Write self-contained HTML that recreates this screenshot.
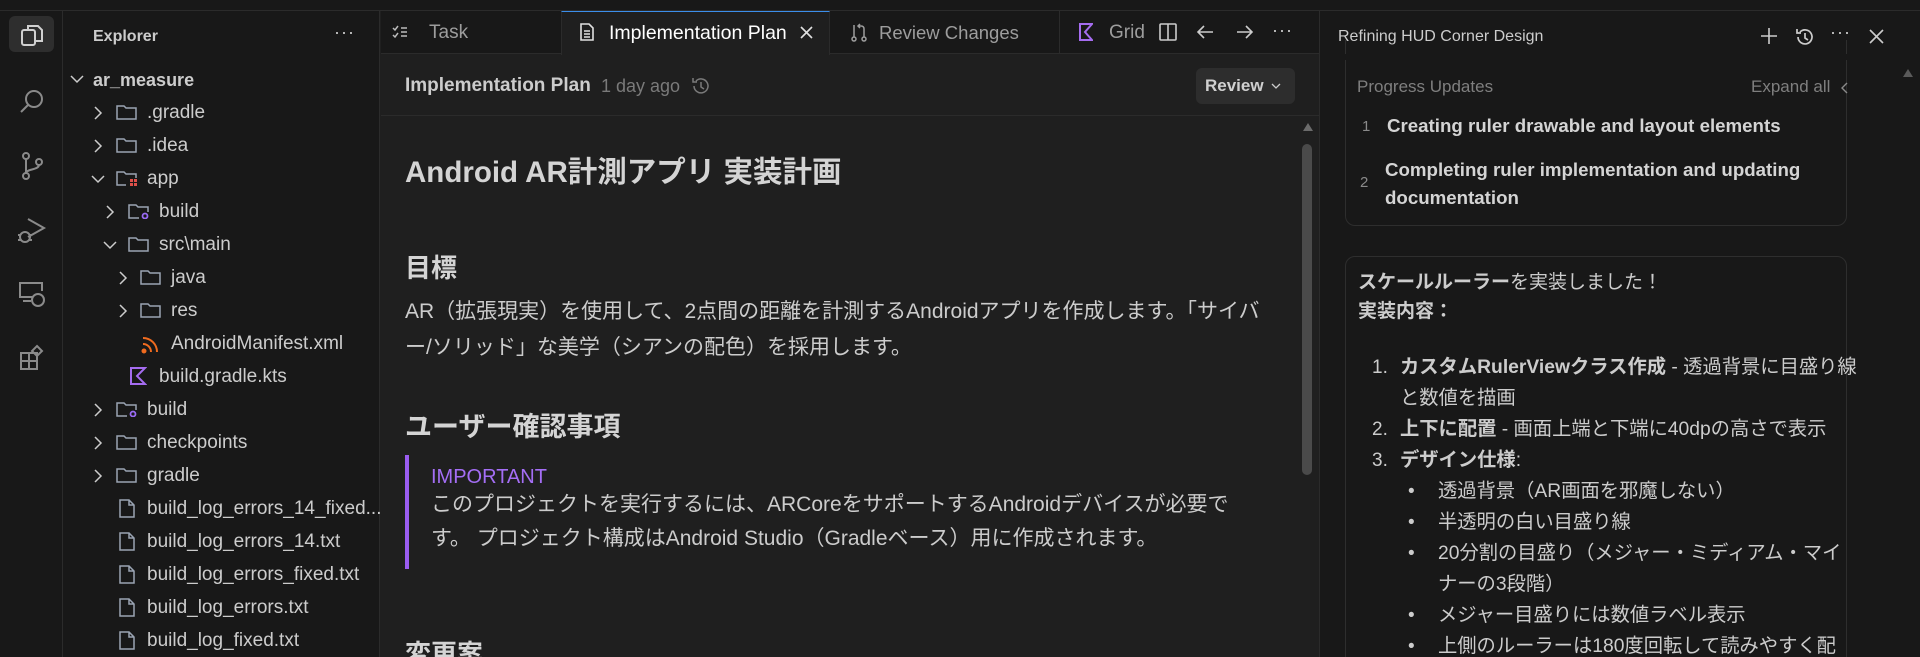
<!DOCTYPE html>
<html style="width:1920px;height:657px;overflow:hidden"><head><meta charset="utf-8"><style>
*{margin:0;padding:0;box-sizing:border-box}
body{width:1920px;height:657px;overflow:hidden;background:#1f1f1f;font-family:"Liberation Sans","Noto Sans CJK JP",sans-serif;color:#cccccc;position:relative}
.a{position:absolute;white-space:nowrap}
svg{position:absolute}
.row{position:absolute;font-size:19px;color:#cccccc;white-space:nowrap;line-height:22px}
</style></head><body>
<div class="a" style="left:0;top:0;width:1920px;height:11px;background:#181818;border-bottom:1px solid #2b2b2b"></div>
<div class="a" style="left:0;top:11px;width:63px;height:646px;background:#181818;border-right:1px solid #2b2b2b"></div>
<div class="a" style="left:9px;top:16px;width:45px;height:36px;background:#2e2e2e;border-radius:6px"></div>
<svg style="left:19px;top:22px" width="26" height="26" viewBox="0 0 26 26" fill="none" stroke="#d0d0d0" stroke-width="2"><rect x="3" y="8" width="13" height="15" rx="2"/><path d="M9 8V4h10l4 4v11h-7"/></svg>
<svg style="left:18px;top:88px" width="28" height="28" viewBox="0 0 28 28" fill="none" stroke="#8a8a8a" stroke-width="2"><circle cx="16" cy="11" r="8"/><path d="M10 17L3 24"/></svg>
<svg style="left:19px;top:151px" width="26" height="30" viewBox="0 0 26 30" fill="none" stroke="#8a8a8a" stroke-width="2"><circle cx="7" cy="5" r="3"/><circle cx="7" cy="25" r="3"/><circle cx="20" cy="11" r="3"/><path d="M7 8v14M20 14c0 5-13 4-13 8"/></svg>
<svg style="left:16px;top:216px" width="32" height="30" viewBox="0 0 32 30" fill="none" stroke="#8a8a8a" stroke-width="2"><path d="M12 3l16 9-16 9"/><circle cx="9" cy="21" r="5"/><path d="M2 19h3M2 24h3M13 19h3M13 24h3"/></svg>
<svg style="left:17px;top:280px" width="30" height="28" viewBox="0 0 30 28" fill="none" stroke="#8a8a8a" stroke-width="2"><path d="M16 17H3V3h22v8"/><path d="M6 21h8"/><circle cx="21" cy="20" r="6"/></svg>
<svg style="left:18px;top:343px" width="28" height="28" viewBox="0 0 28 28" fill="none" stroke="#8a8a8a" stroke-width="2"><rect x="3" y="10" width="8" height="8"/><rect x="11" y="10" width="8" height="8"/><rect x="3" y="18" width="8" height="8"/><rect x="11" y="18" width="8" height="8"/><path d="M19 3l5 5-5 5-5-5z"/></svg>
<div class="a" style="left:63px;top:11px;width:317px;height:646px;background:#181818;border-right:1px solid #2b2b2b"></div>
<div class="a" style="left:93px;top:28px;font-size:16px;font-weight:bold;color:#cccccc">Explorer</div>
<div class="a" style="left:334px;top:22px;font-size:18px;color:#cccccc;letter-spacing:1px">···</div>
<div class="a" style="left:381px;top:11px;width:938px;height:43px;background:#181818;border-bottom:1px solid #2b2b2b"></div>
<div class="a" style="left:561px;top:11px;width:269px;height:44px;background:#1f1f1f;border-top:1px solid #3b8eea;border-left:1px solid #2b2b2b;border-right:1px solid #2b2b2b"></div>
<div class="a" style="left:1059px;top:11px;width:1px;height:43px;background:#2b2b2b"></div>
<svg style="left:392px;top:25px" width="16" height="14" viewBox="0 0 16 14" fill="none" stroke="#bbbbbb" stroke-width="1.5"><path d="M1 3l2 2 3-4M1 10l2 2 3-4M9 3h6M9 7h6M9 11h6"/></svg>
<div class="a" style="left:429px;top:22px;font-size:19px;color:#9d9d9d">Task</div>
<svg style="left:580px;top:23px" width="14" height="18" viewBox="0 0 14 18" fill="none" stroke="#e0e0e0" stroke-width="1.6"><path d="M1 1h8l4 4v12H1z"/><path d="M4 8h6M4 11h6M4 14h6"/></svg>
<div class="a" style="left:609px;top:22px;font-size:19.5px;color:#ffffff">Implementation Plan</div>
<svg style="left:800px;top:26px" width="13" height="13" viewBox="0 0 13 13" stroke="#e0e0e0" stroke-width="1.6"><path d="M1 1l11 11M12 1L1 12"/></svg>
<svg style="left:851px;top:23px" width="16" height="20" viewBox="0 0 16 20" fill="none" stroke="#9d9d9d" stroke-width="1.5"><circle cx="3" cy="16" r="2"/><circle cx="13" cy="16" r="2"/><path d="M3 14V2M13 14V6c0-2-1-3-3-3H7M9 1L7 3l2 2"/></svg>
<div class="a" style="left:879px;top:22px;font-size:18.5px;color:#9d9d9d">Review Changes</div>
<svg style="left:1078px;top:23px" width="15" height="18" viewBox="0 0 15 18" fill="none" stroke="#a56cf0" stroke-width="2"><path d="M2 1v16h12L7 9l7-8z"/></svg>
<div class="a" style="left:1109px;top:22px;font-size:19px;color:#9d9d9d">Grid</div>
<svg style="left:1158px;top:22px" width="20" height="20" viewBox="0 0 20 20" fill="none" stroke="#cccccc" stroke-width="1.6"><rect x="2" y="2" width="16" height="16" rx="1"/><path d="M10 2v16"/></svg>
<svg style="left:1196px;top:24px" width="18" height="16" viewBox="0 0 18 16" fill="none" stroke="#cccccc" stroke-width="1.6"><path d="M17 8H2M8 2L2 8l6 6"/></svg>
<svg style="left:1236px;top:24px" width="18" height="16" viewBox="0 0 18 16" fill="none" stroke="#cccccc" stroke-width="1.6"><path d="M1 8h15M10 2l6 6-6 6"/></svg>
<div class="a" style="left:1272px;top:20px;font-size:18px;color:#cccccc;letter-spacing:1px">···</div>
<div class="a" style="left:381px;top:55px;width:938px;height:61px;border-bottom:1px solid #2b2b2b"></div>
<div class="a" style="left:405px;top:75px;font-size:19px;font-weight:bold;color:#cccccc">Implementation Plan</div>
<div class="a" style="left:601px;top:76px;font-size:18px;color:#7a7a7a">1 day ago</div>
<svg style="left:690px;top:75px" width="22" height="22" viewBox="0 0 22 22" fill="none" stroke="#7a7a7a" stroke-width="1.5"><path d="M4 11a7 7 0 1 0 2-5M3 3v4h4"/><path d="M11 7v5l3 2"/></svg>
<div class="a" style="left:1196px;top:68px;width:99px;height:36px;background:#2d2d2d;border-radius:6px"></div>
<div class="a" style="left:1205px;top:76px;font-size:17px;font-weight:bold;color:#d0d0d0">Review</div>
<svg style="left:1271px;top:83px" width="10" height="7" viewBox="0 0 10 7" fill="none" stroke="#cccccc" stroke-width="1.3"><path d="M1 1l4 4 4-4"/></svg>
<div class="a" style="left:405px;top:149px;font-size:29.5px;font-weight:bold;color:#d4d4d4">Android AR計測アプリ 実装計画</div>
<div class="a" style="left:405px;top:248px;font-size:26px;font-weight:bold;color:#d4d4d4">目標</div>
<div class="a" style="left:405px;top:294px;font-size:21px;line-height:36px;color:#cccccc">AR（拡張現実）を使用して、2点間の距離を計測するAndroidアプリを作成します。「サイバ<br>ー/ソリッド」な美学（シアンの配色）を採用します。</div>
<div class="a" style="left:405px;top:405px;font-size:27px;font-weight:bold;color:#d4d4d4">ユーザー確認事項</div>
<div class="a" style="left:405px;top:455px;width:4px;height:114px;background:#9a5cf0"></div>
<div class="a" style="left:431px;top:466px;font-size:20px;color:#a46ef5">IMPORTANT</div>
<div class="a" style="left:431px;top:488px;font-size:21px;line-height:34px;color:#cccccc">このプロジェクトを実行するには、ARCoreをサポートするAndroidデバイスが必要で<br>す。 プロジェクト構成はAndroid Studio（Gradleベース）用に作成されます。</div>
<div class="a" style="left:405px;top:634px;font-size:26px;font-weight:bold;color:#d4d4d4">変更案</div>
<svg style="left:1302px;top:122px" width="12" height="10" viewBox="0 0 12 10"><path d="M6 1l5 8H1z" fill="#6b6b6b"/></svg>
<div class="a" style="left:1302px;top:144px;width:10px;height:331px;background:#4a4a4a;border-radius:5px"></div>
<div class="a" style="left:1319px;top:11px;width:601px;height:646px;background:#181818;border-left:1px solid #2b2b2b;overflow:hidden">
<div class="a" style="left:25px;top:245px;width:502px;height:420px;border:1px solid #2e2e2e;border-radius:10px"></div>
</div>
<div class="a" style="left:1338px;top:28px;font-size:16px;color:#cccccc">Refining HUD Corner Design</div>
<svg style="left:1760px;top:27px" width="18" height="18" viewBox="0 0 18 18" stroke="#cccccc" stroke-width="1.6"><path d="M9 1v16M1 9h16"/></svg>
<svg style="left:1794px;top:26px" width="22" height="22" viewBox="0 0 22 22" fill="none" stroke="#cccccc" stroke-width="1.7"><path d="M4 11a7 7 0 1 0 2-5M3 3v4h4"/><path d="M11 7v5l3 2"/></svg>
<div class="a" style="left:1830px;top:22px;font-size:18px;color:#cccccc;letter-spacing:1px">···</div>
<svg style="left:1869px;top:29px" width="15" height="15" viewBox="0 0 15 15" stroke="#cccccc" stroke-width="1.6"><path d="M1 1l13 13M14 1L1 14"/></svg>
<div class="a" style="left:1345px;top:40px;width:502px;height:186px;border:1px solid #2e2e2e;border-top:none;border-radius:0 0 10px 10px"></div>
<div class="a" style="left:1320px;top:54px;width:600px;height:6px;background:#181818"></div>
<div class="a" style="left:1357px;top:77px;font-size:17px;color:#7f7f7f">Progress Updates</div>
<div class="a" style="left:1751px;top:77px;font-size:17px;color:#7f7f7f">Expand all</div>
<svg style="left:1840px;top:82px" width="8" height="12" viewBox="0 0 8 12" fill="none" stroke="#8a8a8a" stroke-width="1.4"><path d="M7 1L2 6l5 5"/></svg>
<div class="a" style="left:1362px;top:118px;font-size:15px;color:#8a8a8a">1</div>
<div class="a" style="left:1387px;top:115px;font-size:18.7px;font-weight:bold;color:#d4d4d4">Creating ruler drawable and layout elements</div>
<div class="a" style="left:1360px;top:174px;font-size:15px;color:#8a8a8a">2</div>
<div class="a" style="left:1385px;top:156px;font-size:18.7px;font-weight:bold;color:#d4d4d4;line-height:28px">Completing ruler implementation and updating<br>documentation</div>
<div class="a" style="left:1358px;top:268px;font-size:19px;line-height:29px;color:#cccccc"><b>スケールルーラー</b>を実装しました！<br><b>実装内容：</b></div>
<div class="a" style="left:1372px;top:352px;font-size:19px;line-height:31px;color:#cccccc">1.<br><br>2.<br>3.</div>
<div class="a" style="left:1400px;top:352px;font-size:19.3px;line-height:31px;color:#cccccc"><b>カスタムRulerViewクラス作成</b> - 透過背景に目盛り線<br>と数値を描画<br><b>上下に配置</b> - 画面上端と下端に40dpの高さで表示<br><b>デザイン仕様</b>:</div>
<div class="a" style="left:1408px;top:476px;font-size:19px;line-height:31px;color:#cccccc">•<br>•<br>•<br><br>•<br>•</div>
<div class="a" style="left:1438px;top:476px;font-size:19.3px;line-height:31px;color:#cccccc">透過背景（AR画面を邪魔しない）<br>半透明の白い目盛り線<br>20分割の目盛り（メジャー・ミディアム・マイ<br>ナーの3段階）<br>メジャー目盛りには数値ラベル表示<br>上側のルーラーは180度回転して読みやすく配</div>
<svg style="left:1902px;top:68px" width="12" height="10" viewBox="0 0 12 10"><path d="M6 1l5 8H1z" fill="#5a5a5a"/></svg>
<svg style="left:70px;top:74px" width="14" height="10" viewBox="0 0 14 10" fill="none" stroke="#cccccc" stroke-width="1.5"><path d="M1 2l6 6 6-6"/></svg>
<div class="row" style="left:93px;top:69px;font-weight:bold;font-size:18px">ar_measure</div>
<div class="row" style="left:147px;top:102px">.gradle</div>
<div class="row" style="left:147px;top:135px">.idea</div>
<div class="row" style="left:147px;top:168px">app</div>
<div class="row" style="left:159px;top:201px">build</div>
<div class="row" style="left:159px;top:234px">src\main</div>
<div class="row" style="left:171px;top:267px">java</div>
<div class="row" style="left:171px;top:300px">res</div>
<div class="row" style="left:171px;top:333px">AndroidManifest.xml</div>
<div class="row" style="left:159px;top:366px">build.gradle.kts</div>
<div class="row" style="left:147px;top:399px">build</div>
<div class="row" style="left:147px;top:432px">checkpoints</div>
<div class="row" style="left:147px;top:465px">gradle</div>
<div class="row" style="left:147px;top:498px">build_log_errors_14_fixed...</div>
<div class="row" style="left:147px;top:531px">build_log_errors_14.txt</div>
<div class="row" style="left:147px;top:564px">build_log_errors_fixed.txt</div>
<div class="row" style="left:147px;top:597px">build_log_errors.txt</div>
<div class="row" style="left:147px;top:630px">build_log_fixed.txt</div>
<svg style="left:93px;top:106px" width="10" height="14" viewBox="0 0 10 14" fill="none" stroke="#cccccc" stroke-width="1.5"><path d="M2 1l6 6-6 6"/></svg>
<svg style="left:93px;top:139px" width="10" height="14" viewBox="0 0 10 14" fill="none" stroke="#cccccc" stroke-width="1.5"><path d="M2 1l6 6-6 6"/></svg>
<svg style="left:91px;top:174px" width="14" height="10" viewBox="0 0 14 10" fill="none" stroke="#cccccc" stroke-width="1.5"><path d="M1 2l6 6 6-6"/></svg>
<svg style="left:105px;top:205px" width="10" height="14" viewBox="0 0 10 14" fill="none" stroke="#cccccc" stroke-width="1.5"><path d="M2 1l6 6-6 6"/></svg>
<svg style="left:103px;top:240px" width="14" height="10" viewBox="0 0 14 10" fill="none" stroke="#cccccc" stroke-width="1.5"><path d="M1 2l6 6 6-6"/></svg>
<svg style="left:118px;top:271px" width="10" height="14" viewBox="0 0 10 14" fill="none" stroke="#cccccc" stroke-width="1.5"><path d="M2 1l6 6-6 6"/></svg>
<svg style="left:118px;top:304px" width="10" height="14" viewBox="0 0 10 14" fill="none" stroke="#cccccc" stroke-width="1.5"><path d="M2 1l6 6-6 6"/></svg>
<svg style="left:93px;top:403px" width="10" height="14" viewBox="0 0 10 14" fill="none" stroke="#cccccc" stroke-width="1.5"><path d="M2 1l6 6-6 6"/></svg>
<svg style="left:93px;top:436px" width="10" height="14" viewBox="0 0 10 14" fill="none" stroke="#cccccc" stroke-width="1.5"><path d="M2 1l6 6-6 6"/></svg>
<svg style="left:93px;top:469px" width="10" height="14" viewBox="0 0 10 14" fill="none" stroke="#cccccc" stroke-width="1.5"><path d="M2 1l6 6-6 6"/></svg>
<svg style="left:116px;top:104px" width="22" height="16" viewBox="0 0 22 16" fill="none" stroke="#9aa4b3" stroke-width="1.5"><path d="M1 2h7l2 2h10v11H1z"/></svg>
<svg style="left:116px;top:137px" width="22" height="16" viewBox="0 0 22 16" fill="none" stroke="#9aa4b3" stroke-width="1.5"><path d="M1 2h7l2 2h10v11H1z"/></svg>
<svg style="left:116px;top:170px" width="22" height="16" viewBox="0 0 22 16" fill="none"><path d="M10 15H1V2h7l2 2h10v4" stroke="#9aa4b3" stroke-width="1.5"/><rect x="14" y="9" width="3" height="3" fill="#e0504a"/><rect x="18" y="9" width="3" height="3" fill="#e0504a"/><rect x="14" y="13" width="3" height="3" fill="#e0504a"/><rect x="18" y="13" width="3" height="3" fill="#e0504a"/></svg>
<svg style="left:128px;top:203px" width="22" height="16" viewBox="0 0 22 16" fill="none"><path d="M11 15H1V2h7l2 2h10v5" stroke="#9aa4b3" stroke-width="1.5"/><circle cx="17" cy="13" r="2.5" stroke="#9a6cf5" stroke-width="1.8"/></svg>
<svg style="left:128px;top:236px" width="22" height="16" viewBox="0 0 22 16" fill="none" stroke="#9aa4b3" stroke-width="1.5"><path d="M1 2h7l2 2h10v11H1z"/></svg>
<svg style="left:140px;top:269px" width="22" height="16" viewBox="0 0 22 16" fill="none" stroke="#9aa4b3" stroke-width="1.5"><path d="M1 2h7l2 2h10v11H1z"/></svg>
<svg style="left:140px;top:302px" width="22" height="16" viewBox="0 0 22 16" fill="none" stroke="#9aa4b3" stroke-width="1.5"><path d="M1 2h7l2 2h10v11H1z"/></svg>
<svg style="left:141px;top:334px" width="20" height="20" viewBox="0 0 20 20" fill="none" stroke="#f06b1f" stroke-width="2"><circle cx="3" cy="17" r="1.5" fill="#f06b1f"/><path d="M2 10a8 8 0 0 1 8 8M2 4a14 14 0 0 1 14 14"/></svg>
<svg style="left:129px;top:367px" width="18" height="18" viewBox="0 0 18 18" fill="none" stroke="#a56cf0" stroke-width="2"><path d="M2 1v16h14L8 9l8-8z"/></svg>
<svg style="left:116px;top:401px" width="22" height="16" viewBox="0 0 22 16" fill="none"><path d="M11 15H1V2h7l2 2h10v5" stroke="#9aa4b3" stroke-width="1.5"/><circle cx="17" cy="13" r="2.5" stroke="#9a6cf5" stroke-width="1.8"/></svg>
<svg style="left:116px;top:434px" width="22" height="16" viewBox="0 0 22 16" fill="none" stroke="#9aa4b3" stroke-width="1.5"><path d="M1 2h7l2 2h10v11H1z"/></svg>
<svg style="left:116px;top:467px" width="22" height="16" viewBox="0 0 22 16" fill="none" stroke="#9aa4b3" stroke-width="1.5"><path d="M1 2h7l2 2h10v11H1z"/></svg>
<svg style="left:119px;top:499px" width="16" height="19" viewBox="0 0 16 19" fill="none" stroke="#9aa4b3" stroke-width="1.5"><path d="M1 1h9l5 5v12H1zM10 1v5h5"/></svg>
<svg style="left:119px;top:532px" width="16" height="19" viewBox="0 0 16 19" fill="none" stroke="#9aa4b3" stroke-width="1.5"><path d="M1 1h9l5 5v12H1zM10 1v5h5"/></svg>
<svg style="left:119px;top:565px" width="16" height="19" viewBox="0 0 16 19" fill="none" stroke="#9aa4b3" stroke-width="1.5"><path d="M1 1h9l5 5v12H1zM10 1v5h5"/></svg>
<svg style="left:119px;top:598px" width="16" height="19" viewBox="0 0 16 19" fill="none" stroke="#9aa4b3" stroke-width="1.5"><path d="M1 1h9l5 5v12H1zM10 1v5h5"/></svg>
<svg style="left:119px;top:631px" width="16" height="19" viewBox="0 0 16 19" fill="none" stroke="#9aa4b3" stroke-width="1.5"><path d="M1 1h9l5 5v12H1zM10 1v5h5"/></svg>
</body></html>
